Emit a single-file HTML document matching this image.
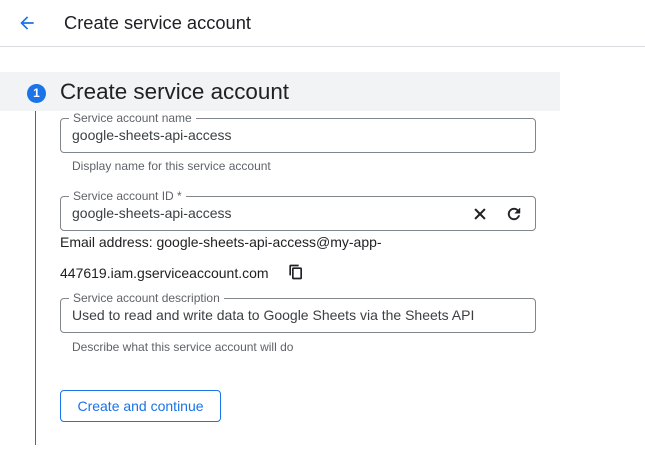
<!DOCTYPE html>
<html><head><style>
*{box-sizing:border-box;margin:0;padding:0}
body{width:645px;height:449px;background:#fff;font-family:"Liberation Sans",Arial,sans-serif;color:#202124;position:relative;overflow:hidden}
.a{position:absolute}
.field{position:absolute;left:60px;width:476px;height:35px;border:1px solid #80868b;border-radius:4px}
.field .lab{position:absolute;left:8px;top:-8px;background:#fff;padding:0 4px;font-size:12px;color:#5f6368;line-height:14px}
.field .val{position:absolute;left:11px;top:8px;font-size:14px;color:#3c4043}
.help{position:absolute;left:72px;font-size:12px;color:#5f6368}
</style></head><body>
<svg class="a" style="left:17px;top:13px" width="20" height="20" viewBox="0 0 24 24"><path d="M20 11H7.83l5.59-5.59L12 4l-8 8 8 8 1.41-1.41L7.83 13H20v-2z" fill="#1a73e8"/></svg>
<div class="a" style="left:64px;top:12px;font-size:18.3px;color:#202124">Create service account</div>
<div class="a" style="left:0;top:46px;width:645px;height:1px;background:#dadce0"></div>
<div class="a" style="left:0;top:72px;width:560px;height:39px;background:#f1f3f4"></div>
<div class="a" style="left:27px;top:84px;width:19px;height:19px;border-radius:50%;background:#1a73e8;color:#fff;font-size:12px;font-weight:bold;text-align:center;line-height:19px">1</div>
<div class="a" style="left:60px;top:79px;font-size:22.4px;color:#202124">Create service account</div>
<div class="a" style="left:35px;top:111px;width:1px;height:334px;background:#5f6368"></div>

<div class="field" style="top:118px"><div class="lab">Service account name</div><div class="val">google-sheets-api-access</div></div>
<div class="help" style="top:159px">Display name for this service account</div>

<div class="field" style="top:196px"><div class="lab">Service account ID *</div><div class="val">google-sheets-api-access</div>
<svg class="a" style="left:410px;top:8px" width="18" height="18" viewBox="0 0 24 24"><path d="M19 6.41L17.59 5 12 10.59 6.41 5 5 6.41 10.59 12 5 17.59 6.41 19 12 13.41 17.59 19 19 17.59 13.41 12z" fill="#202124" stroke="#202124" stroke-width="0.8"/></svg>
<svg class="a" style="left:444px;top:8px" width="18" height="18" viewBox="0 0 24 24"><path d="M17.65 6.35A7.96 7.96 0 0 0 12 4a8 8 0 1 0 7.73 10h-2.08A6 6 0 1 1 12 6c1.66 0 3.14.69 4.22 1.78L13 11h7V4l-2.35 2.35z" fill="#202124" stroke="#202124" stroke-width="0.6"/></svg>
</div>
<div class="a" style="left:60px;top:234px;font-size:14px">Email address: google-sheets-api-access@my-app-</div>
<div class="a" style="left:60px;top:265px;font-size:14px">447619.iam.gserviceaccount.com</div>
<svg class="a" style="left:288px;top:264px" width="16" height="16" viewBox="0 0 24 24"><path d="M16 1H4c-1.1 0-2 .9-2 2v14h2.5V3.5H16V1zm3 4H8c-1.1 0-2 .9-2 2v14c0 1.1.9 2 2 2h11c1.1 0 2-.9 2-2V7c0-1.1-.9-2-2-2zm-.5 15.5h-10v-13h10v13z" fill="#202124"/></svg>

<div class="field" style="top:298px"><div class="lab">Service account description</div><div class="val">Used to read and write data to Google Sheets via the Sheets API</div></div>
<div class="help" style="top:340px">Describe what this service account will do</div>

<div class="a" style="left:60px;top:390px;width:161px;height:32px;border:1px solid #1a73e8;border-radius:4px;color:#1a73e8;font-size:14px;text-align:center;line-height:30px">Create and continue</div>
</body></html>
